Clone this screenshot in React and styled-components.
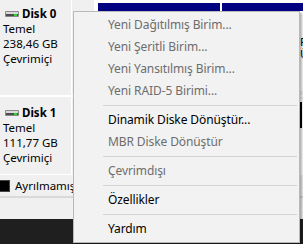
import React from 'react';
import styled, { createGlobalStyle } from 'styled-components';

const GlobalStyle = createGlobalStyle`
  html, body {
    margin: 0;
    padding: 0;
    width: 303px;
    height: 244px;
    overflow: hidden;
    background: #f0f0f0;
  }
  body {
    font-family: 'Noto Sans', 'Open Sans', sans-serif;
  }
`;

const Screen = styled.div`
  position: relative;
  width: 303px;
  height: 244px;
  display: flex;
  flex-direction: column;
  overflow: hidden;
  background: #f0f0f0;
`;

const DiskList = styled.div`
  height: 174px;
  flex-shrink: 0;
  overflow: hidden;
`;

const DiskScroll = styled.div`
  margin-top: -2px;
`;

const DiskRow = styled.div`
  display: flex;
  height: 99px;
  box-sizing: border-box;
  border-bottom: 2px solid #fff;
`;

const DiskInfo = styled.div`
  width: 72px;
  flex-shrink: 0;
  box-sizing: border-box;
  padding: 8px 0 0 3px;
  border-right: 1px solid #fff;
  font-size: 11.5px;
  line-height: 15px;
  color: #000;
  white-space: nowrap;
`;

const DiskTitle = styled.div`
  display: flex;
  align-items: center;
  gap: 3px;
  padding-left: 2px;
  font-weight: 700;
`;

const VolumeMap = styled.div`
  flex: 1;
  min-width: 0;
  display: flex;
  padding: 2px 0 4px 22px;
  overflow: hidden;
`;

const Volume = styled.div`
  flex: ${p => (p.$width ? `0 0 ${p.$width}px` : '1 0 160px')};
  display: flex;
  flex-direction: column;
  box-sizing: border-box;
  padding: 3px 1px;
  background: #fff;

  &:first-child {
    padding-left: 4px;
  }
`;

const VolumeHead = styled.div`
  height: ${p => p.$height || 8}px;
  flex-shrink: 0;
  background: ${p => p.$color};
`;

const VolumeBody = styled.div`
  flex: 1;
  padding: 25px 4px 0 78px;
  font-size: 11.5px;
  line-height: 12px;
  color: #000;
  white-space: nowrap;
  background: #fff;
`;

const Legend = styled.div`
  height: 24px;
  flex-shrink: 0;
  box-sizing: border-box;
  display: flex;
  align-items: center;
  gap: 5px;
  border-top: 1px solid #fff;
  border-bottom: 2px solid #d9d9d9;
  font-size: 11.5px;
  color: #000;
  white-space: nowrap;
`;

const Swatch = styled.span`
  width: 10px;
  height: 12px;
  box-sizing: border-box;
  background: ${p => p.$color};
  border: 1px solid #444;
  border-left: none;
`;

const StatusArea = styled.div`
  flex: 1;
  background: #f0f0f0;
`;

const Taskbar = styled.div`
  height: 25px;
  flex-shrink: 0;
  background: #1f1f1f;
`;

const Menu = styled.div`
  position: absolute;
  left: 73px;
  top: 11px;
  width: 227px;
  box-sizing: border-box;
  padding: 2px 0;
  background: #f2f2f2;
  border: 1px solid #b9b9b9;
  box-shadow: 2px 2px 2px rgba(0, 0, 0, 0.3);
  font-size: 12px;
  letter-spacing: -0.1px;
`;

const MenuItem = styled.div`
  height: 22px;
  line-height: 22px;
  padding-left: 34px;
  color: ${p => (p.$disabled ? '#6d6d6d' : '#000')};
  white-space: nowrap;
`;

const Separator = styled.div`
  height: 1px;
  margin: 3px 2px 3px 29px;
  background: #d3d3d3;
`;

function DiskIcon() {
  return (
    <svg width="14" height="6" viewBox="0 0 14 6">
      <rect x="0" y="0" width="14" height="6" rx="1" fill="#8a8a8a" />
      <rect x="1" y="1" width="12" height="2" fill="#d9d9d9" />
      <rect x="1" y="3" width="12" height="2" fill="#4d4d4d" />
      <rect x="9" y="3" width="3" height="2" fill="#35d435" />
    </svg>
  );
}

const disks = [
  {
    name: 'Disk 0',
    size: '238,46 GB',
    volumes: [
      { width: 127, color: '#000080', lines: [] },
      { color: '#000080', lines: ['F', 'Ü'] },
    ],
  },
  {
    name: 'Disk 1',
    size: '111,77 GB',
    volumes: [{ color: '#000', head: 26, lines: [] }],
  },
];

const menu = [
  { label: 'Yeni Dağıtılmış Birim...', disabled: true },
  { label: 'Yeni Şeritli Birim...', disabled: true },
  { label: 'Yeni Yansıtılmış Birim...', disabled: true },
  { label: 'Yeni RAID-5 Birimi...', disabled: true },
  'sep',
  { label: 'Dinamik Diske Dönüştür...' },
  { label: 'MBR Diske Dönüştür', disabled: true },
  'sep',
  { label: 'Çevrimdışı', disabled: true },
  'sep',
  { label: 'Özellikler' },
  'sep',
  { label: 'Yardım' },
];

export default function App() {
  return (
    <Screen>
      <GlobalStyle />
      <DiskList>
        <DiskScroll>
          {disks.map(disk => (
            <DiskRow key={disk.name}>
              <DiskInfo>
                <DiskTitle>
                  <DiskIcon />
                  {disk.name}
                </DiskTitle>
                <div>Temel</div>
                <div>{disk.size}</div>
                <div>Çevrimiçi</div>
              </DiskInfo>
              <VolumeMap>
                {disk.volumes.map((v, i) => (
                  <Volume key={i} $width={v.width}>
                    <VolumeHead $color={v.color} $height={v.head} />
                    <VolumeBody>
                      {v.lines.map((l, j) => (
                        <div key={j}>{l}</div>
                      ))}
                    </VolumeBody>
                  </Volume>
                ))}
              </VolumeMap>
            </DiskRow>
          ))}
        </DiskScroll>
      </DiskList>
      <Legend>
        <Swatch $color="#000" />
        Ayrılmamış
      </Legend>
      <StatusArea />
      <Taskbar />

      <Menu>
        {menu.map((item, i) =>
          item === 'sep' ? (
            <Separator key={i} />
          ) : (
            <MenuItem key={i} $disabled={item.disabled}>
              {item.label}
            </MenuItem>
          )
        )}
      </Menu>
    </Screen>
  );
}
